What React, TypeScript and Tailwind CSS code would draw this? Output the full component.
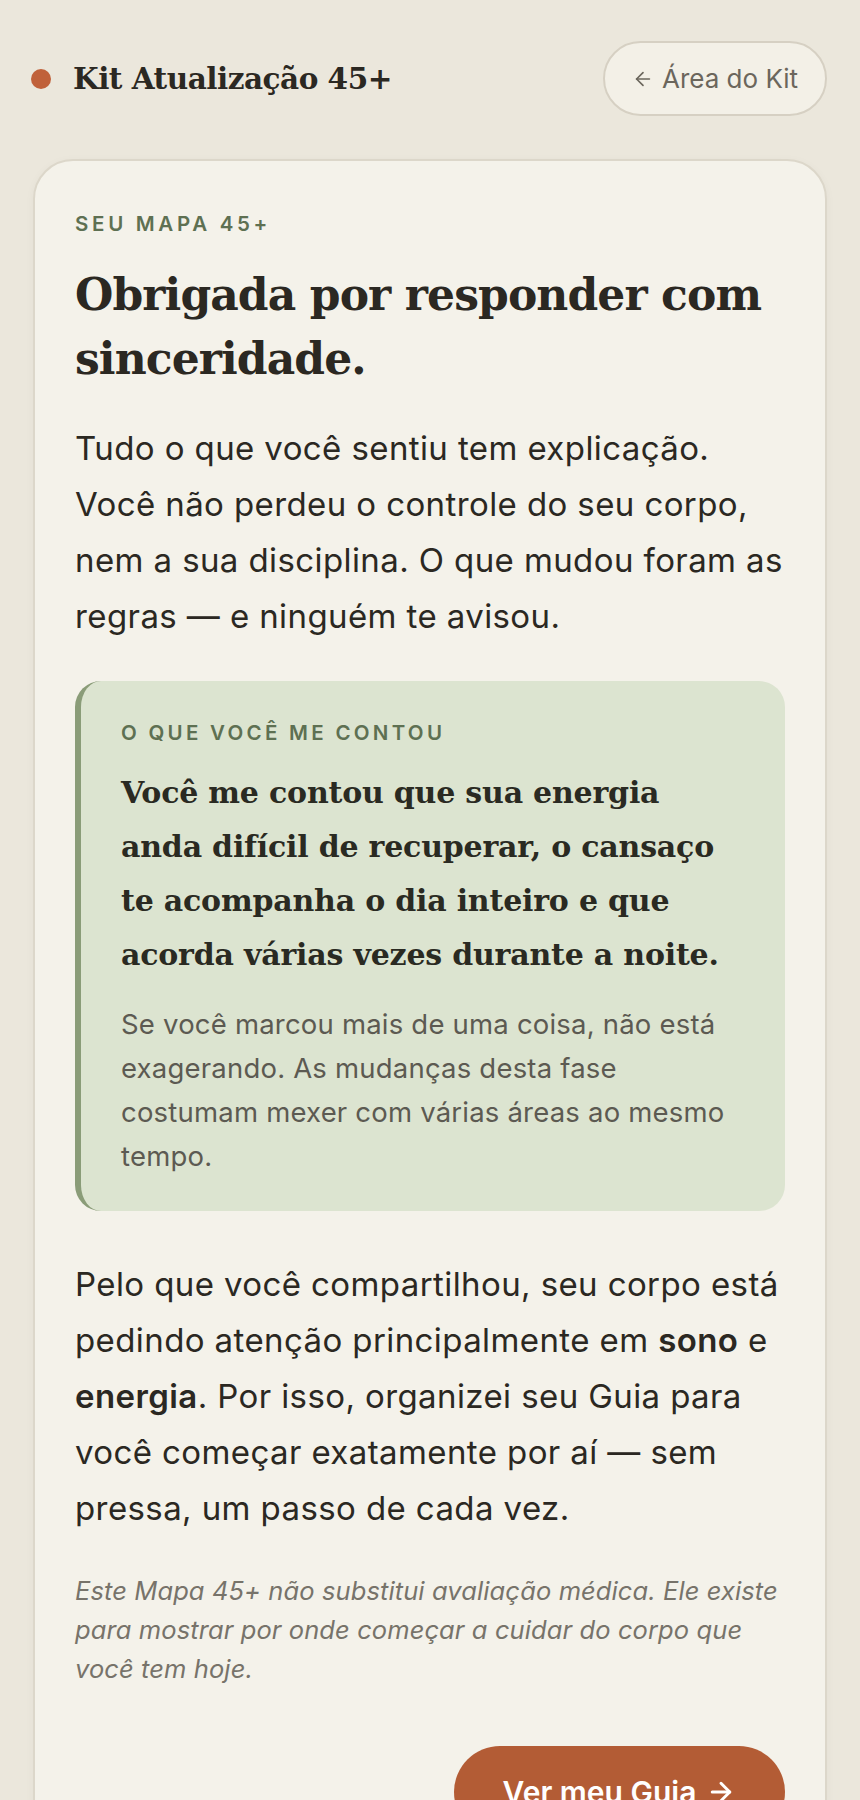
import { ArrowLeft, ArrowRight } from 'lucide-react';

const serif = { fontFamily: '"DejaVu Serif", "Liberation Serif", serif' };

export default function App() {
  return (
    <div
      className="min-h-screen bg-[#ebe7dc] text-[#2b2822]"
      style={{ fontFamily: 'Inter, "Noto Sans", sans-serif' }}
    >
      <header className="flex items-center justify-between pl-[31px] pr-[33px] pt-[41px]">
        <div className="flex items-center gap-[22px]">
          <span className="h-[20px] w-[20px] rounded-full bg-[#c0613a]" />
          <span className="text-[29.5px] font-bold leading-none tracking-[-0.5px]" style={serif}>
            Kit Atualização 45+
          </span>
        </div>
        <button className="flex h-[75px] w-[224px] items-center justify-center gap-[8px] rounded-full border-2 border-[#d6d0c3] bg-[#f3f0e7] text-[26px] text-[#6b665c]">
          <ArrowLeft className="h-[22px] w-[22px]" strokeWidth={1.8} />
          Área do Kit
        </button>
      </header>

      <main className="mx-[33px] mt-[43px] rounded-[40px] border-2 border-[#dcd7ca] bg-[#f4f2ea] px-[40px] pb-[60px] pt-[47px] shadow-[0_2px_10px_rgba(60,50,30,0.04)]">
        <p className="text-[20.5px] font-semibold uppercase leading-[31px] tracking-[0.18em] text-[#5e7052]">
          Seu Mapa 45+
        </p>
        <h1 className="mt-[24px] text-[44px] font-bold leading-[64px] tracking-[-0.9px]" style={serif}>
          Obrigada por responder com sinceridade.
        </h1>
        <p className="mt-[29px] text-[33px] leading-[56px] tracking-[0.4px]">
          Tudo o que você sentiu tem explicação. Você não perdeu o controle do seu corpo, nem a sua
          disciplina. O que mudou foram as regras — e ninguém te avisou.
        </p>

        <section className="mt-[37px] rounded-[26px] border-l-[6px] border-[#8a9c78] bg-[#dce4d0] pb-[33px] pl-[40px] pr-[40px] pt-[36px]">
          <p className="text-[20.5px] font-semibold uppercase leading-[31px] tracking-[0.16em] text-[#5e7052]">
            O que você me contou
          </p>
          <p className="mt-[18px] text-[30px] font-bold leading-[54px] tracking-[-0.2px] text-[#2a2a22]" style={serif}>
            Você me contou que sua energia anda difícil de recuperar, o cansaço te acompanha o dia
            inteiro e que acorda várias vezes durante a noite.
          </p>
          <p className="mt-[20px] text-[27.5px] leading-[44px] tracking-[0.2px] text-[#5c5a52]">
            Se você marcou mais de uma coisa, não está exagerando. As mudanças desta fase costumam
            mexer com várias áreas ao mesmo tempo.
          </p>
        </section>

        <p className="mt-[45px] text-[33px] leading-[56px] tracking-[0.4px]">
          Pelo que você compartilhou, seu corpo está pedindo atenção principalmente em{' '}
          <strong className="font-semibold">sono</strong> e{' '}
          <strong className="font-semibold">energia</strong>. Por isso, organizei seu Guia para você
          começar exatamente por aí — sem pressa, um passo de cada vez.
        </p>

        <p className="mt-[35px] text-[25.5px] italic leading-[39px] tracking-[0.1px] text-[#77736a]">
          Este Mapa 45+ não substitui avaliação médica. Ele existe para mostrar por onde começar a
          cuidar do corpo que você tem hoje.
        </p>

        <div className="mt-[58px] flex justify-end">
          <button className="flex h-[92px] w-[331px] items-center justify-center gap-[10px] rounded-full bg-[#b35c35] text-[30px] font-semibold text-white">
            Ver meu Guia
            <ArrowRight className="h-[30px] w-[30px]" strokeWidth={2.4} />
          </button>
        </div>
      </main>
    </div>
  );
}
